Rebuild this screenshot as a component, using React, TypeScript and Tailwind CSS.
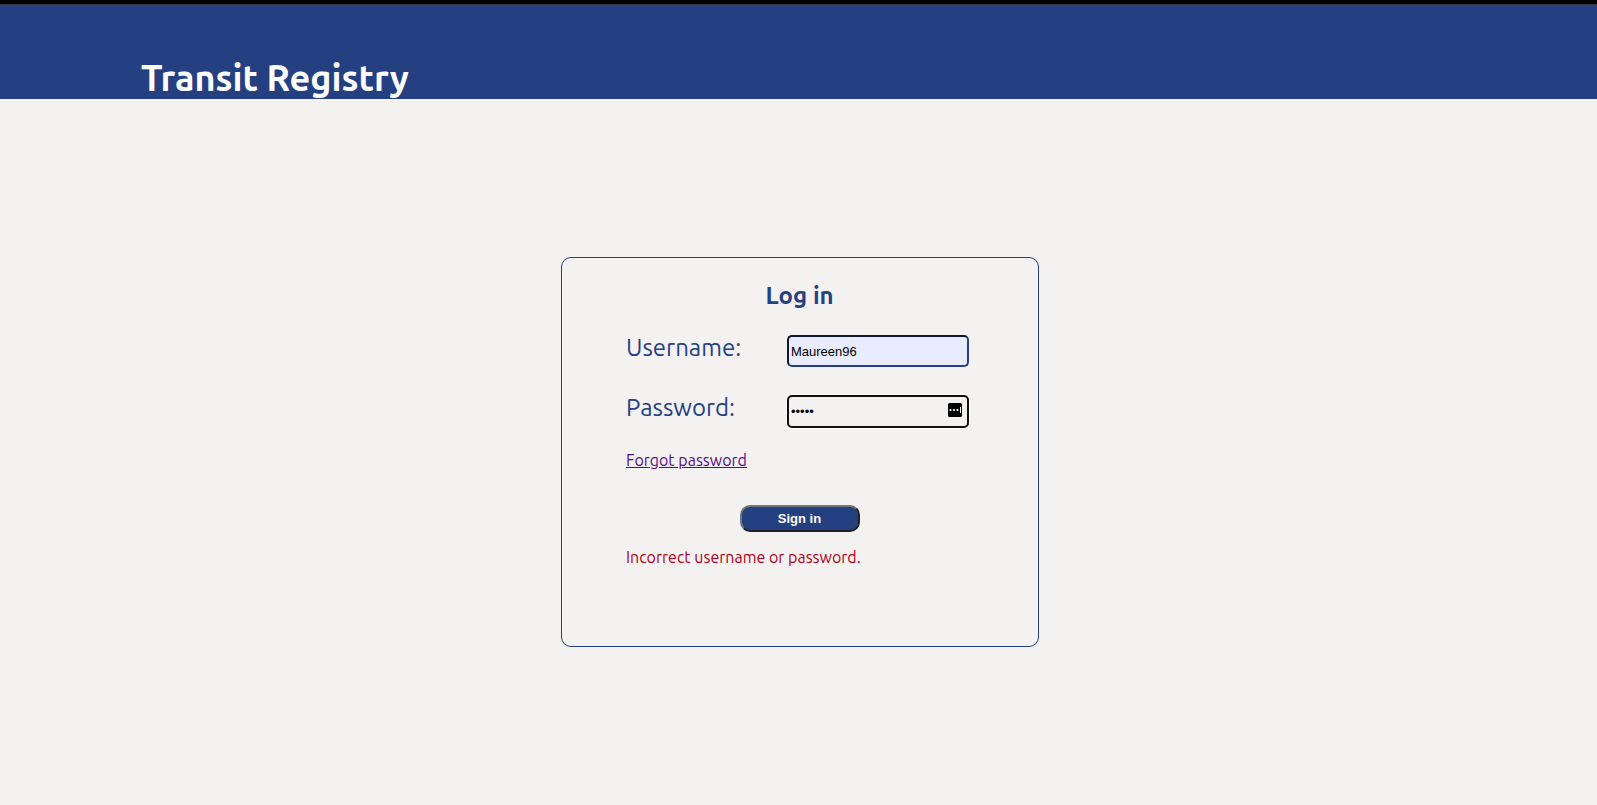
import { useState } from "react";

function PasswordManagerIcon() {
  return (
    <svg width="14" height="14" viewBox="0 0 14 14" aria-hidden="true">
      <rect width="14" height="14" rx="1.5" fill="#000" />
      <circle cx="2.5" cy="7" r="1.1" fill="#fff" />
      <circle cx="6" cy="7" r="1.1" fill="#fff" />
      <circle cx="9.5" cy="7" r="1.1" fill="#fff" />
      <rect x="12" y="4" width="1" height="6" fill="#fff" />
    </svg>
  );
}

export default function App() {
  const [username, setUsername] = useState("Maureen96");
  const [password, setPassword] = useState("12345");

  return (
    <div className="flex min-h-screen flex-col bg-[#f4f2f1] font-['Ubuntu','Noto_Sans',sans-serif] text-[#244081]">
      <div className="h-1 bg-black" />
      <header className="border-t border-[#333b45] bg-[#244081] pt-[52px]">
        <h1 className="ml-[141px] text-4xl leading-[42px] font-bold text-white">Transit Registry</h1>
      </header>
      <main className="flex justify-center pt-[158px] pl-[3px]">
        <form
          className="flex min-h-[390px] w-[478px] flex-col rounded-[10px] border border-[#244081] pt-6 pr-[69px] pl-16"
          onSubmit={(event) => event.preventDefault()}
        >
          <h2 className="ml-1 text-center text-2xl leading-7 font-bold">Log in</h2>
          <div className="mt-[25px] flex items-start justify-between">
            <label htmlFor="username" className="text-2xl leading-[26px]">
              Username:
            </label>
            <input
              id="username"
              type="text"
              value={username}
              onChange={(event) => setUsername(event.target.value)}
              className="h-8 w-[182px] rounded-[5px] border-2 border-t-[#0e192f] border-r-[#244081] border-b-[#244081] border-l-[#0e192f] bg-[#e8ecfe] px-0.5 font-['Liberation_Sans',sans-serif] text-[13px] text-black outline-none"
            />
          </div>
          <div className="mt-7 flex items-start justify-between">
            <label htmlFor="password" className="text-2xl leading-[26px]">
              Password:
            </label>
            <div className="relative">
              <input
                id="password"
                type="password"
                value={password}
                onChange={(event) => setPassword(event.target.value)}
                className="block h-[33px] w-[182px] rounded-[5px] border-2 border-[#101010] bg-transparent pr-6 pl-0.5 font-['Liberation_Sans',sans-serif] text-[13px] text-black shadow-[0_0_0_1px_#fff] outline-none"
              />
              <span className="absolute top-2 right-[7px]">
                <PasswordManagerIcon />
              </span>
            </div>
          </div>
          <a href="#forgot" className="mt-5 self-start text-base leading-6 text-[#5a0a8c] underline">
            Forgot password
          </a>
          <button
            type="submit"
            className="mt-[33px] ml-1 h-[27px] w-[120px] self-center rounded-[10px] border-2 border-t-[#767676] border-r-[#212121] border-b-[#212121] border-l-[#767676] bg-[#244081] font-['Liberation_Sans',sans-serif] text-[13px] leading-none font-bold text-white"
          >
            Sign in
          </button>
          <p role="alert" className="mt-[13px] text-base leading-6 text-[#b00020]">
            Incorrect username or password.
          </p>
        </form>
      </main>
    </div>
  );
}
